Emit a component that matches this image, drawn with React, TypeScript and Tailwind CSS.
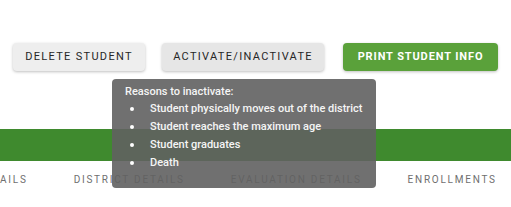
const reasons = [
  'Student physically moves out of the district',
  'Student reaches the maximum age',
  'Student graduates',
  'Death',
];

const tabs = ['STUDENT DETAILS', 'DISTRICT DETAILS', 'EVALUATION DETAILS', 'ENROLLMENTS'];

export default function App() {
  return (
    <div
      className="relative h-[207px] w-[511px] overflow-hidden bg-white"
      style={{ fontFamily: 'Roboto, "Liberation Sans", sans-serif' }}
    >
      <div className="flex items-center pt-[43px] pl-[13px]">
        <button className="h-[28px] w-[132px] rounded-[4px] bg-[#eeeeee] text-[11px] font-normal tracking-[0.12em] text-[#262626] shadow-[0_1px_3px_rgba(0,0,0,0.25)]">
          DELETE STUDENT
        </button>
        <button className="ml-[17px] h-[28px] w-[162px] rounded-[4px] bg-[#e6e6e6] text-[11px] font-normal tracking-[0.12em] text-[#262626] shadow-[0_1px_3px_rgba(0,0,0,0.25)]">
          ACTIVATE/INACTIVATE
        </button>
        <button className="ml-[19px] h-[28px] w-[155px] rounded-[4px] bg-[#5aa13a] text-[11px] font-bold tracking-[0.08em] text-white shadow-[0_1px_3px_rgba(0,0,0,0.25)]">
          PRINT STUDENT INFO
        </button>
      </div>

      <div className="mt-[58px] h-[32px] bg-[#3f8a2e]" />

      <div className="mt-[11px] flex whitespace-nowrap">
        <div className="-ml-[106px] flex">
          {tabs.map((t) => (
            <span key={t} className="px-[23px] text-[10px] tracking-[0.175em] text-[#6f6f6f]">
              {t}
            </span>
          ))}
        </div>
      </div>

      <div className="absolute left-[112px] top-[79px] h-[109px] w-[264px] rounded-[4px] bg-[rgba(97,97,97,0.9)] pl-[13px] pt-[4px] text-[11px] font-medium text-[#f5f5f5]">
        <div className="leading-[17px]">Reasons to inactivate:</div>
        <ul className="leading-[18px]">
          {reasons.map((r) => (
            <li key={r} className="flex items-center">
              <span className="ml-[5px] mr-[16px] h-[4px] w-[4px] rounded-full bg-white" />
              {r}
            </li>
          ))}
        </ul>
      </div>
    </div>
  );
}
